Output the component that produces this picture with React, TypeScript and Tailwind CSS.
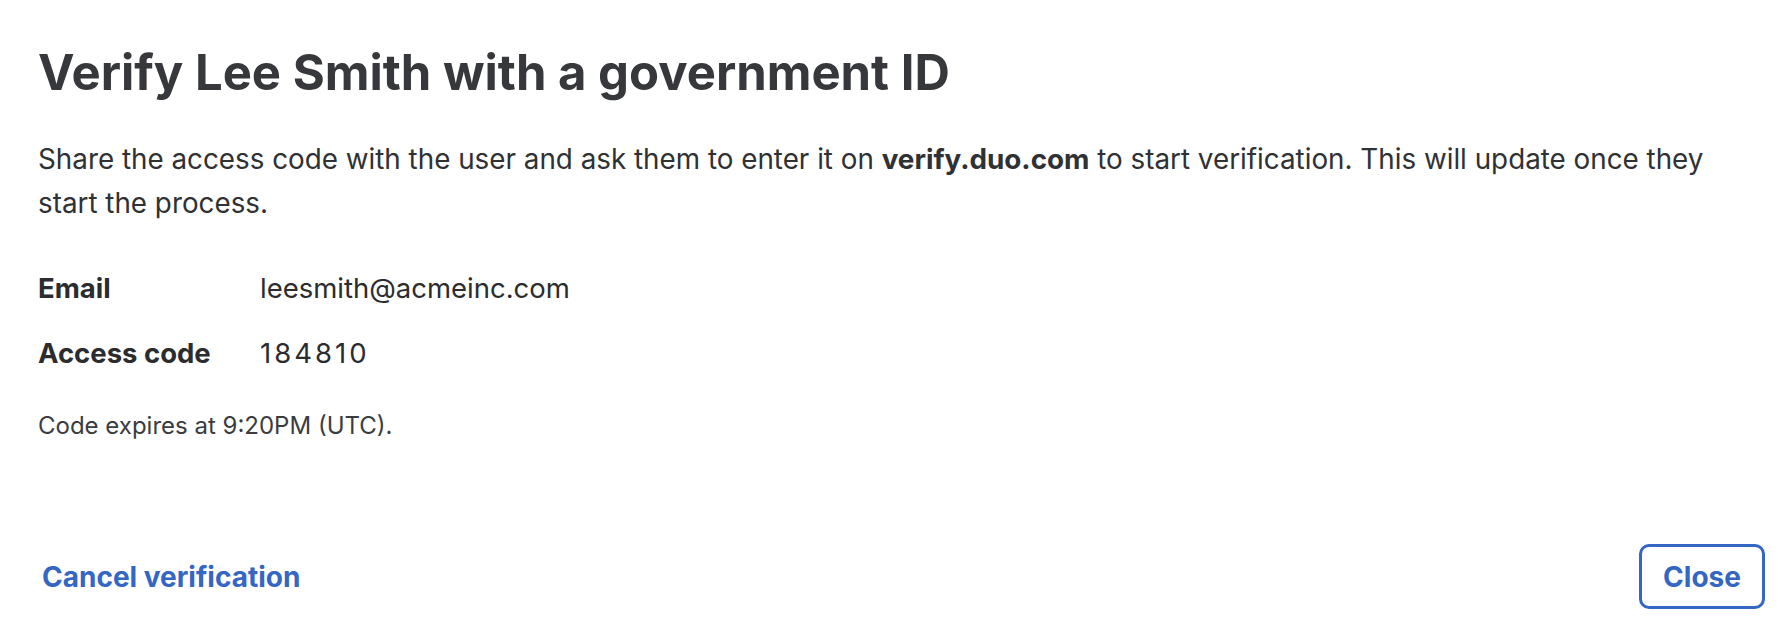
import React from "react";

export default function App() {
  return (
    <div
      className="w-[1782px] h-[644px] bg-white overflow-hidden pl-[38px] pr-[17px] pt-[44px]"
      style={{ fontFamily: "Inter, 'Noto Sans', sans-serif" }}
    >
      <h1 className="text-[49px] leading-[58px] font-bold text-[#36383b]">
        Verify Lee Smith with a government ID
      </h1>
      <p className="mt-[35px] text-[27.8px] leading-[44px] text-[#2f3134] max-w-[1710px]">
        Share the access code with the user and ask them to enter it on{" "}
        <span className="font-bold">verify.duo.com</span> to start verification. This will update once they start the
        process.
      </p>
      <div className="mt-[43px] flex flex-col gap-[25px] text-[27.5px] leading-[40px] text-[#2a2c30]">
        <div className="flex">
          <span className="w-[222px] font-bold">Email</span>
          <span>leesmith@acmeinc.com</span>
        </div>
        <div className="flex">
          <span className="w-[222px] font-bold">Access code</span>
          <span className="tracking-[3px]">184810</span>
        </div>
      </div>
      <p className="mt-[37px] text-[24px] leading-[32px] text-[#3a3c40]">Code expires at 9:20PM (UTC).</p>
      <div className="mt-[102px] flex items-center justify-between">
        <button className="pl-[4px] text-[28px] leading-[34px] font-bold text-[#3466c4]">Cancel verification</button>
        <button className="w-[126px] h-[65px] border-[3px] border-[#3466c4] rounded-[10px] flex items-center justify-center text-[28px] leading-[34px] font-bold text-[#3466c4]">
          Close
        </button>
      </div>
    </div>
  );
}
